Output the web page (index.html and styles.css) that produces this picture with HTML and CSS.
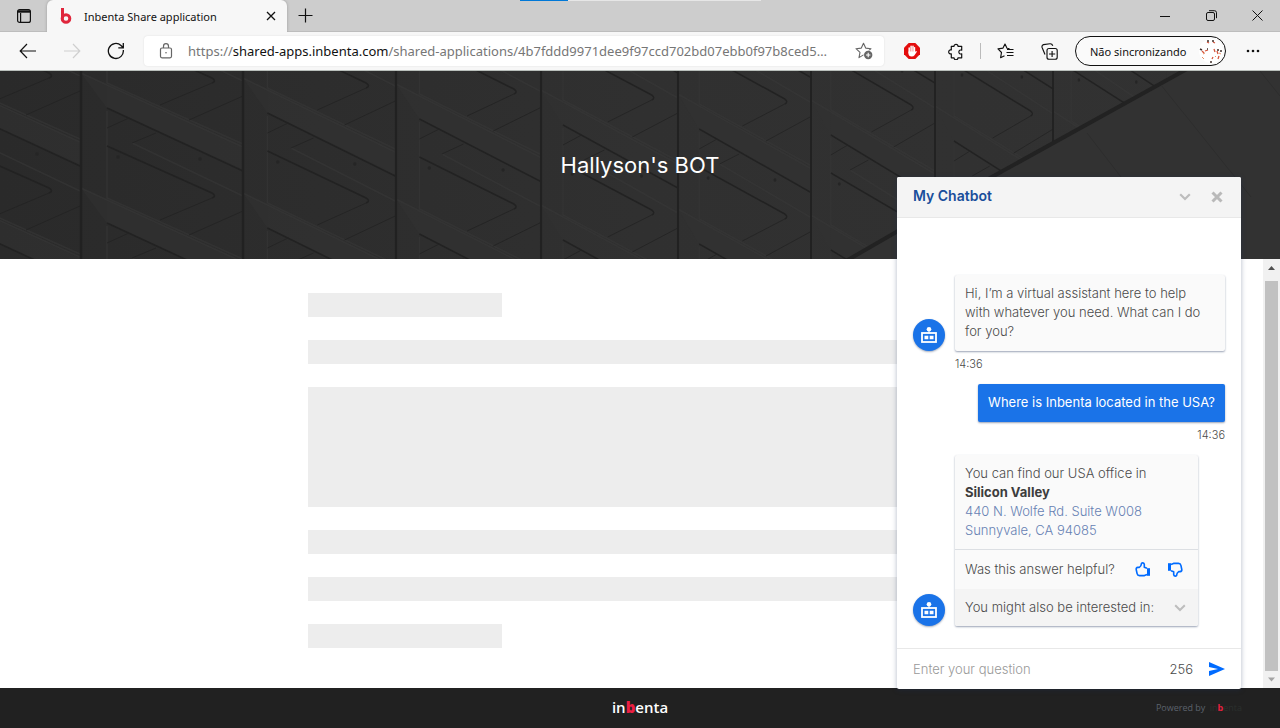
FILE: index.html
```html
<!DOCTYPE html>
<html lang="en">
<head>
<meta charset="utf-8">
<title>Inbenta Share application</title>
<link rel="stylesheet" href="styles.css">
</head>
<body>
<header class="browser">
  <div class="tabs">
    <div class="loading"></div>
    <button class="tab-actions" aria-label="Tab actions">
      <svg width="16" height="16" viewBox="0 0 16 16" fill="none" stroke="#111" stroke-width="1.2"><rect x="1.6" y="1.6" width="12.8" height="12.8" rx="2"/><path d="M2 3.5h12" stroke-width="2.4"/><path d="M4.6 5v9"/></svg>
    </button>
    <div class="tab">
      <svg width="12" height="16" viewBox="0 0 12 16" fill="none" stroke="#e0263c" stroke-width="3"><path d="M2.500 0v10.500"/><circle cx="6" cy="10.500" r="3.800"/></svg>
      <span class="tab-title">Inbenta Share application</span>
      <button class="tab-close" aria-label="Close tab"><svg width="10" height="10" viewBox="0 0 10 10" stroke="#111" stroke-width="1.300"><path d="M1 1l8 8M9 1L1 9"/></svg></button>
    </div>
    <button class="new-tab" aria-label="New tab"><svg width="15" height="15" viewBox="0 0 15 15" stroke="#111" stroke-width="1.200"><path d="M7.500 0.500v14M0.500 7.500h14"/></svg></button>
    <div class="window-controls">
      <button aria-label="Minimize"><svg width="10" height="10" viewBox="0 0 10 10" stroke="#111"><path d="M0 5.500h10"/></svg></button>
      <button aria-label="Restore"><svg width="11" height="11" viewBox="0 0 11 11" fill="none" stroke="#111"><rect x="0.500" y="2.500" width="8" height="8" rx="1.500"/><path d="M3 0.700h5.500a2 2 0 0 1 2 2v5.500"/></svg></button>
      <button aria-label="Close"><svg width="11" height="11" viewBox="0 0 11 11" stroke="#111"><path d="M0.500 0.500l10 10M10.500 0.500l-10 10"/></svg></button>
    </div>
  </div>
  <div class="toolbar">
    <nav class="history">
      <button aria-label="Back"><svg width="18" height="16" viewBox="0 0 18 16" fill="none" stroke="#111" stroke-width="1.200"><path d="M17 8H1.500M8 1L1.200 8 8 15"/></svg></button>
      <button aria-label="Forward" disabled><svg width="18" height="16" viewBox="0 0 18 16" fill="none" stroke="#cfcfcf" stroke-width="1.200"><path d="M1 8h15.500M10 1l6.800 7-6.800 7"/></svg></button>
      <button aria-label="Refresh"><svg width="18" height="18" viewBox="0 0 18 18" fill="none" stroke="#111" stroke-width="1.300"><path d="M16.300 8A7.500 7.500 0 1 1 14 3.500l2 2M16.300 1v4.800h-5"/></svg></button>
    </nav>
    <div class="address">
      <svg width="14" height="16" viewBox="0 0 14 16" fill="none" stroke="#666" stroke-width="1.200"><rect x="1.500" y="5" width="11" height="9.800" rx="1.500"/><path d="M4.500 5V3.200a2.500 2.500 0 0 1 5 0V5"/><circle cx="7" cy="9.800" r="0.800" fill="#666" stroke="none"/></svg>
      <div class="url" role="textbox" aria-label="Address">https://<span class="host">shared-apps.inbenta.com</span>/shared-applications/4b7fddd9971dee9f97ccd702bd07ebb0f97b8ced5…</div>
      <button aria-label="Add to favorites"><svg width="18" height="18" viewBox="0 0 18 18" fill="none" stroke="#666" stroke-width="1.100" stroke-linejoin="round"><path d="M8.500 1.200l2.200 4.900 5.300.6-4 3.700 1 5.200-4.500-2.700L4 15.600l1-5.200L1 6.700l5.300-.6z"/><circle cx="13.200" cy="13" r="4.800" fill="#fff" stroke="none"/><circle cx="13.200" cy="13" r="4.200" fill="#666" stroke="none"/><path d="M13.200 10.800v4.400M11 13h4.400" stroke="#fff"/></svg></button>
    </div>
    <div class="extensions">
      <button aria-label="Ad blocker"><svg width="16" height="16" viewBox="0 0 16 16"><path d="M4.700 0h6.600L16 4.700v6.600L11.300 16H4.700L0 11.300V4.700z" fill="#e40d0d"/><path d="M5.200 5v5M7.100 3.300v6M9 3.300v6" stroke="#fff" stroke-width="1.500" stroke-linecap="round"/><path d="M4.500 8.500h5.300v-4.200q.8-.7 1.400 0v4.500l1-.9q.9 0 .5 1l-2.200 3.400q-.8 1.300-2.800 1.300-3.200 0-3.200-3z" fill="#fff"/></svg></button>
      <button aria-label="Extensions"><svg width="16" height="17" viewBox="0 0 16 17" fill="none" stroke="#111" stroke-width="1.200" stroke-linejoin="round"><path d="M3.300 3.300H6a2 2 0 1 1 4 0h3.700v3.900a2 2 0 1 0 0 3.600v4H10a2 2 0 1 1-4 0H3.300v-4a2 2 0 1 1 0-3.800z"/></svg></button>
      <span class="separator"></span>
      <button aria-label="Favorites"><svg width="17" height="16" viewBox="0 0 17 16" fill="none" stroke="#111" stroke-width="1.150" stroke-linejoin="round"><path d="M12.500 5.600l-2.500-.4L8 1 6 5.100l-5 .8L4.500 9.500l-.9 5.200L7.500 12.800M10 6.500h6.500M9.500 9.500h7M10 12.500h6.500"/></svg></button>
      <button aria-label="Collections"><svg width="17" height="17" viewBox="0 0 17 17" fill="none" stroke="#111" stroke-width="1.150"><rect x="6" y="5.500" width="10.200" height="10.700" rx="2"/><path d="M11.100 8v6M8 11h6.200M4 11.500L1.100 4.500Q.5 2.300 2.500 1.600L9 .8q2-.2 2.800 2"/></svg></button>
    </div>
    <button class="profile">Não sincronizando
      <svg width="24" height="24" viewBox="0 0 24 24"><circle cx="12" cy="12" r="12" fill="#fff"/><g fill="none" stroke="#d4553c" stroke-width="1.300"><path d="M8 3l2 1M14 3l2 1M3 12l2 2M6 12l3-1M15 10l1 3M18 12l1 3M13 20l1-2M19 20l1-3"/></g><path d="M8 2h2M13 2h2M1 10l2 1M21 12h2M8 10h1M11 23h2M18 11h2" stroke="#42302b" stroke-width="1.500"/><path d="M4 15l2-1M20 14l2 1M16 18l1-1M3 18l2 2" stroke="#e99168"/></svg>
    </button>
    <button class="more" aria-label="Settings and more"><svg width="14" height="4" viewBox="0 0 14 4" fill="#111"><circle cx="2" cy="2" r="1.300"/><circle cx="7" cy="2" r="1.300"/><circle cx="12" cy="2" r="1.300"/></svg></button>
  </div>
</header>

<section class="hero">
  <svg class="hero-art" viewBox="0 0 1280 188" preserveAspectRatio="xMidYMid slice" aria-hidden="true">
    <defs>
      <linearGradient id="wall"><stop offset="0" stop-color="#2a2a2a"/><stop offset="0.500" stop-color="#303030"/><stop offset="1" stop-color="#323232"/></linearGradient>
      <g id="panel" fill="none">
        <path d="M0 2l162 74v24L26 37z" fill="#343434" opacity=".45"/>
        <path d="M26 127l136 61v25L26 152z" fill="#343434" opacity=".2"/>
        <path d="M0 2l162 74M51 72l111 53M26 40v87l136 61" stroke="#393939" stroke-width="1.500" opacity=".55"/>
        <path d="M26 37l136 63M26 75l105 47q5 3 0 5" stroke="#222" stroke-width="1.600"/>
        <path d="M131 127l-52 22M162 140l-54 24M26 57l22-10M51 72l24-10" stroke="#242424"/>
        <g fill="#252525"><circle cx="37" cy="86" r="1.800"/><circle cx="119" cy="88" r="1.800"/></g>
      </g>
      <g id="column"><use href="#panel" y="-115"/><use href="#panel"/><use href="#panel" y="115"/><path d="M0-40v270" stroke="#212121" stroke-width="2.500"/></g>
    </defs>
    <rect width="1280" height="188" fill="url(#wall)"/>
    <use href="#column" transform="translate(-82 -5)"/>
    <use href="#column" transform="translate(81 0)"/>
    <use href="#column" transform="translate(243 5) scale(.94 1)"/>
    <use href="#column" transform="translate(396 11) scale(.9 1)"/>
    <use href="#column" transform="translate(541 17) scale(.845 1)"/>
    <use href="#column" transform="translate(678 21) scale(.815 1)"/>
    <use href="#column" transform="translate(811 27) scale(.765 1)"/>
    <use href="#column" transform="translate(935 33) scale(.73 1)"/>
    <use href="#column" transform="translate(1053 38) scale(.7 1)"/>
    <path d="M1187-2L990 107 846 190h434V-2z" fill="#323232"/>
    <path d="M1187-2L990 107 846 190" fill="none" stroke="#222" stroke-width="4"/>
    <path d="M1161 14l90 112M1087 62l34 44M1260 0l20 25" stroke="#2d2d2d"/>
  </svg>
  <h1>Hallyson's BOT</h1>
</section>

<main class="page">
  <div class="skeleton">
    <div class="bar short"></div>
    <div class="bar"></div>
    <div class="bar tall"></div>
    <div class="bar"></div>
    <div class="bar"></div>
    <div class="bar short"></div>
  </div>
  <div class="scrollbar" aria-hidden="true">
    <svg width="17" height="17" viewBox="0 0 17 17"><path d="M5 11l3.500-4 3.500 4z" fill="#505050"/></svg>
    <div class="thumb"></div>
    <svg width="17" height="17" viewBox="0 0 17 17"><path d="M5 6.500h7L8.500 10.500z" fill="#a3a3a3"/></svg>
  </div>
</main>

<footer class="footer">
  <span class="brand">in<b>b</b>enta</span>
  <span class="powered">Powered by <span class="brand-dark">in<b>b</b>enta</span></span>
</footer>

<aside class="chat">
  <header class="chat-head">
    <h2>My Chatbot</h2>
    <button aria-label="Minimize chat"><svg width="12" height="8" viewBox="0 0 12 8" fill="none" stroke="#bdbdbd" stroke-width="2.200"><path d="M1.200 1.200L6 6l4.800-4.800"/></svg></button>
    <button aria-label="Close chat"><svg width="12" height="12" viewBox="0 0 12 12" stroke="#b9b9b9" stroke-width="3"><path d="M1.500 1.500l9 9M10.500 1.500l-9 9"/></svg></button>
  </header>
  <div class="log">
    <div class="message">
      <span class="bot"><svg width="16" height="16" viewBox="0 0 16 16" fill="none" stroke="#fff"><circle cx="8" cy="2.300" r="2.300" fill="#fff" stroke="none"/><path d="M8 3v3"/><rect x="1" y="6" width="14" height="9" stroke-width="1.800"/><path d="M3.500 10.500h9" stroke-width="3.500" stroke-dasharray="3.800 1.400"/></svg></span>
      <div class="bubble greeting"><p>Hi, I’m a virtual assistant here to help with whatever you need. What can I do for you?</p></div>
    </div>
    <time class="time">14:36</time>
    <div class="message user"><div class="bubble"><p>Where is Inbenta located in the USA?</p></div></div>
    <time class="time right">14:36</time>
    <div class="message">
      <span class="bot"><svg width="16" height="16" viewBox="0 0 16 16" fill="none" stroke="#fff"><circle cx="8" cy="2.300" r="2.300" fill="#fff" stroke="none"/><path d="M8 3v3"/><rect x="1" y="6" width="14" height="9" stroke-width="1.800"/><path d="M3.500 10.500h9" stroke-width="3.500" stroke-dasharray="3.800 1.400"/></svg></span>
      <div class="bubble answer">
        <p>You can find our USA office in<br><strong>Silicon Valley</strong><br><a href="#map">440 N. Wolfe Rd. Suite W008<br>Sunnyvale, CA 94085</a></p>
        <div class="rating"><span>Was this answer helpful?</span>
          <button aria-label="Yes"><svg width="16" height="15" viewBox="0 0 16 15" fill="none" stroke="#006bff" stroke-width="1.600" stroke-linejoin="round"><path d="M12 6.300L9.300 5.300V2.200Q9 .9 7.600.9T6.300 2.200Q6.200 4.200 4.300 5.400H2.800Q1 5.600 1.200 7.500l.9 4.200Q2.500 13.600 4.500 13.600h5l2.500-1"/><path d="M13.500 6.200v7.600" stroke-width="3"/></svg></button>
          <button aria-label="No"><svg width="16" height="15" viewBox="0 0 16 15" fill="none" stroke="#006bff" stroke-width="1.600" stroke-linejoin="round"><path d="M4 8.700l2.700 1v3.100q.3 1.300 1.700 1.300t1.300-1.300q.1-2 2-3.200h1.500q1.800-.2 1.600-2.100l-.9-4.200Q13.500 1.400 11.500 1.400h-5L4 2.400"/><path d="M2.500 8.800V1.200" stroke-width="3"/></svg></button>
        </div>
        <button class="related">You might also be interested in:
          <svg width="12" height="8" viewBox="0 0 12 8" fill="none" stroke="#bdbdbd" stroke-width="2"><path d="M1.200 1.200L6 6l4.800-4.800"/></svg>
        </button>
      </div>
    </div>
  </div>
  <form class="ask">
    <input type="text" placeholder="Enter your question" aria-label="Enter your question">
    <span class="count">256</span>
    <button type="button" aria-label="Send"><svg width="16" height="14" viewBox="0 0 16 14" fill="#006bff"><path d="M0 0l16 7-16 7V9l9-2-9-2z"/></svg></button>
  </form>
</aside>
</body>
</html>
```
FILE: styles.css
```css
* { box-sizing: border-box; }
body { margin: 0; min-height: 100vh; display: flex; flex-direction: column; position: relative; font-family: Inter, "Liberation Sans", sans-serif; background: #fff; }
button { border: 0; background: none; padding: 0; margin: 0; font: inherit; color: inherit; display: flex; align-items: center; justify-content: center; }
svg { display: block; flex: none; }
h1, h2, p { margin: 0; }

.browser { font-family: "Noto Sans", "Open Sans", sans-serif; color: #111; background: #f7f7f7; border-bottom: 1px solid #b9bfbb; }
.tabs { position: relative; display: flex; height: 32px; background: #cdcdcd; border-bottom: 1px solid #bdbdbd; }
.loading { position: absolute; top: 0; left: 520px; width: 241px; height: 1px; background: linear-gradient(to right, #0078d7 48px, #e6e6e6 48px); }
.tab-actions { width: 47px; }
.tab { display: flex; align-items: center; width: 240px; height: 32px; padding: 0 10px 0 13px; gap: 12px; background: #f7f7f7; border-radius: 6px 6px 0 0; box-shadow: 0 0 3px #999; clip-path: inset(0 -4px 0 -4px); font-size: 11px; }
.tab-title { flex: 1; white-space: nowrap; }
.tab-close { width: 13px; }
.new-tab { width: 36px; }
.window-controls { display: flex; margin-left: auto; }
.window-controls button { width: 46px; }

.toolbar { display: flex; align-items: center; height: 38px; }
.history { display: flex; width: 144px; padding-left: 6px; }
.history button { width: 44px; }
.address { flex: 1; min-width: 0; display: flex; align-items: center; height: 30px; padding: 0 11px 0 15px; gap: 15px; background: #fff; border-radius: 4px; box-shadow: 0 0 2px #ddd; }
.url { flex: 1; min-width: 0; overflow: hidden; white-space: nowrap; font-size: 13px; color: #767676; }
.host { color: #111; }
.extensions { display: flex; align-items: center; width: 191px; padding-left: 6px; }
.extensions button { width: 44px; }
.separator { width: 1px; height: 16px; margin: 0 2px; background: #bbb; }
.profile { width: 151px; height: 30px; padding: 0 2px 0 14px; justify-content: space-between; white-space: nowrap; border: 1px solid #111; border-radius: 15px; font-size: 11px; background: #fafafa; }
.more { width: 54px; }

.hero { position: relative; display: flex; align-items: center; justify-content: center; height: 188px; overflow: hidden; background: #2e2e2e; }
.hero-art { position: absolute; inset: 0; width: 100%; height: 100%; }
.hero h1 { position: relative; color: #fff; font-size: 22px; font-weight: 400; line-height: 28px; }

.page { flex: 1; display: flex; }
.skeleton { display: flex; flex-direction: column; gap: 23px; width: 648px; margin: 0 auto; padding: 34px 0 40px; }
.bar { height: 24px; background: #ededed; }
.bar.short { width: 30%; }
.bar.tall { height: 120px; }
.scrollbar { display: flex; flex-direction: column; gap: 5px; width: 17px; background: #f1f1f1; }
.scrollbar svg:last-child { margin-top: -5px; }
.thumb { flex: 1; margin: 0 2px; background: #c1c1c1; }

.footer { display: grid; grid-template-columns: 1fr auto 1fr; align-items: center; height: 40px; padding: 0 38px 2px; background: #212121; font-family: "Open Sans", sans-serif; }
.brand { grid-column: 2; color: #fff; font-size: 15px; font-weight: 600; line-height: 20px; }
.brand b { color: #ec1f43; }
.powered { justify-self: end; color: #5c626c; font-size: 9px; }
.brand-dark { color: #2b302d; margin-left: 2px; }
.brand-dark b { color: #e6203f; }

.chat { position: absolute; right: 39px; bottom: 39px; width: 344px; height: 512px; display: flex; flex-direction: column; background: #fff; border-radius: 2px; box-shadow: 0 1px 5px rgba(30, 50, 90, .35); font-size: 13px; font-weight: 300; line-height: 19px; color: #4a4a4a; }
.chat-head { display: flex; align-items: center; height: 41px; padding: 0 18px 0 16px; gap: 20px; background: #f4f4f4; border-bottom: 1px solid #e8e8e8; border-radius: 2px 2px 0 0; }
.chat-head h2 { flex: 1; padding-bottom: 4px; font-size: 14px; font-weight: 600; color: #194e9b; }
.log { flex: 1; display: flex; flex-direction: column; justify-content: flex-end; padding: 0 16px 22px; }
.message { display: flex; align-items: flex-end; gap: 10px; }
.message.user { justify-content: flex-end; }
.bot { flex: none; display: flex; align-items: center; justify-content: center; width: 32px; height: 32px; border-radius: 50%; background: #1a73e8; box-shadow: 0 1px 2px rgba(30, 50, 90, .4); }
.bubble { background: #fafafa; border-radius: 2px; box-shadow: 0 1px 2px rgba(30, 50, 90, .45); }
.bubble p { padding: 9px 10px 10px; }
.greeting p { padding-right: 22px; }
.user .bubble { background: #1a73e8; color: #fff; font-weight: 400; }
.answer { width: 243px; }
.answer p { padding-bottom: 9px; border-bottom: 1px solid #dcdfe3; }
.answer strong { font-weight: 700; color: #3d3d3d; }
.answer a { color: #6681b3; text-decoration: none; }
.rating { display: flex; align-items: center; gap: 16px; height: 39px; padding: 0 15px 0 10px; }
.rating span { flex: 1; white-space: nowrap; }
.related { width: 100%; height: 37px; padding: 0 12px 0 10px; justify-content: space-between; background: #f4f4f4; white-space: nowrap; border-radius: 0 0 2px 2px; }
.time { margin: 6px 0 13px 42px; font-size: 11px; line-height: 14px; }
.time.right { text-align: right; }
.ask { display: flex; align-items: center; height: 41px; padding: 0 16px; border-top: 1px solid #e8e8e8; }
.ask input { flex: 1; min-width: 0; border: 0; padding: 0; outline: 0; background: none; font: inherit; color: inherit; }
.ask input::placeholder { color: #999; }
.count { margin-right: 16px; }
```
